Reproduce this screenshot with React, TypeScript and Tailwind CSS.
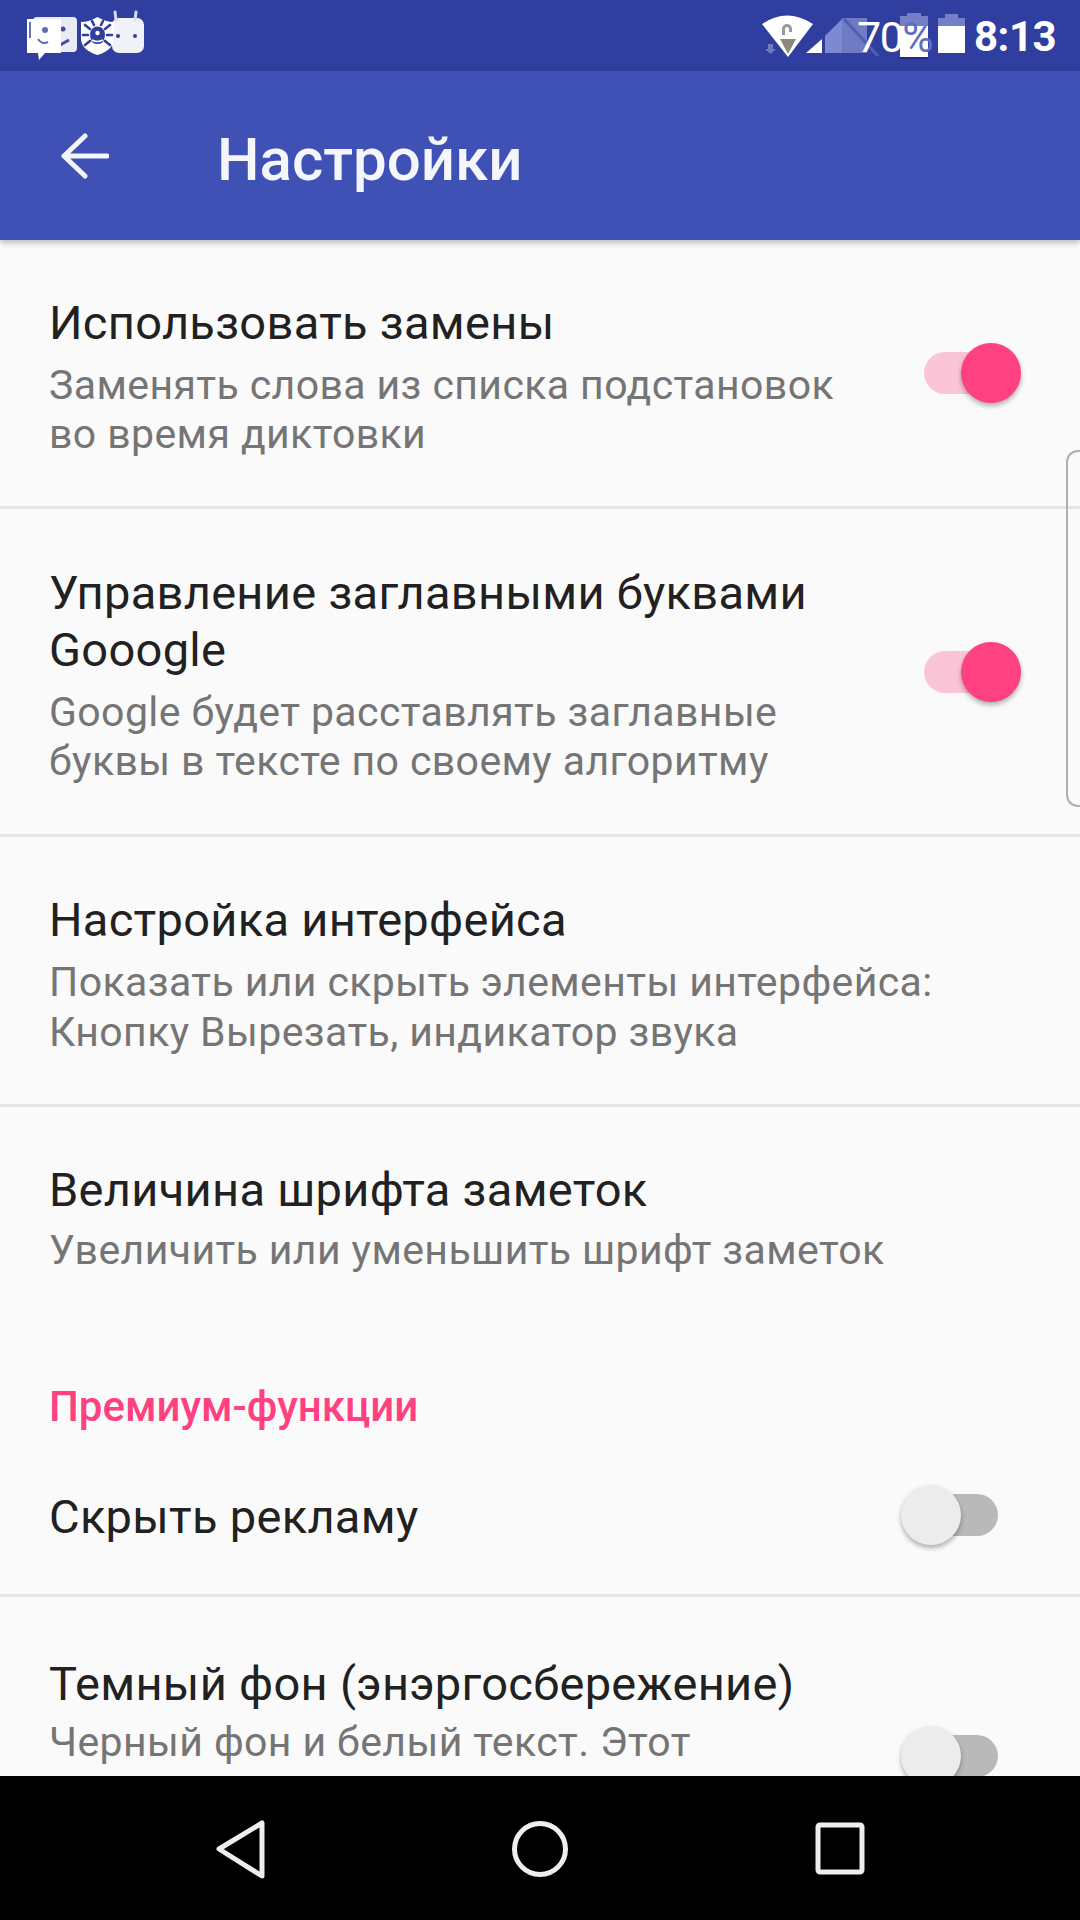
import React from "react";

function Sw({ on, className = "" }: { on: boolean; className?: string }) {
  return (
    <div className={`relative h-[60px] w-[97px] shrink-0 ${className}`}>
      <div className={`absolute top-[9px] h-[42px] rounded-full ${on ? "left-0 w-[76px] bg-[#fbc5d8]" : "left-[14px] w-[83px] bg-[#b9b9b9]"}`} />
      <div className={`absolute top-0 h-[60px] w-[60px] rounded-full ${on ? "left-[37px] bg-[#ff4081]" : "left-0 bg-[#ececec]"} shadow-[0_3px_5px_rgba(0,0,0,0.3)]`} />
    </div>
  );
}

function Row({ title, sub, sw, className = "" }: { title: React.ReactNode; sub?: React.ReactNode; sw?: "on" | "off"; className?: string }) {
  return (
    <div className={`flex items-center border-b-[3px] border-[#e4e4e4] pl-[49px] ${className}`}>
      <div className="w-[810px] shrink-0 pt-[7px]">
        <div className="text-[47px] leading-[57px] text-[#212121] tracking-[0.3px]">{title}</div>
        {sub && <div className="mt-[10px] text-[41px] leading-[49.5px] text-[#757575] tracking-[0.4px]">{sub}</div>}
      </div>
      {sw && <Sw on={sw === "on"} className={sw === "on" ? "ml-[65px]" : "ml-[42px] mt-[4px]"} />}
    </div>
  );
}

function LeftIcons() {
  return (
    <svg width="150" height="50" viewBox="0 0 150 50" className="block">
      <rect x="33" y="7" width="44" height="35" rx="4" fill="#e9ebf6" />
      <circle cx="63" cy="19" r="2.500" fill="#3f4ea5" />
      <path d="M60 35l9-5" stroke="#3f4ea5" strokeWidth="3" />
      <path d="M27 9h34v34H45l-6 7-1-7H27z" fill="#fff" />
      <circle cx="45" cy="20" r="3" fill="#5d6bb5" />
      <path d="M38 29q4 6 10 3" stroke="#5d6bb5" strokeWidth="2" fill="none" />
      <path d="M30 12v16" stroke="#303f9f" strokeWidth="1.500" />
      <rect x="112" y="8" width="32" height="35" rx="7" fill="#f1f1f8" />
      <path d="M116 10l-1-8M135 10l1-8" stroke="#d8daef" strokeWidth="3" strokeLinecap="round" />
      <circle cx="118" cy="26" r="2" fill="#303f9f" />
      <circle cx="135" cy="26" r="2" fill="#303f9f" />
      <path d="M97.500 7q8 5 16.500 5v16q0 12-16.500 17-16.500-5-16.500-17V12q8.500 0 16.500-5z" fill="#fff" />
      <path d="M90 24a7.500 7.500 0 0 1 15 0q0 10-7.500 10T90 24z" fill="#303f9f" />
      <circle cx="97.500" cy="23" r="2.200" fill="#fff" />
      <path d="M92 30q5 3 11 0" stroke="#fff" strokeWidth="1.500" fill="none" />
      <path d="M90 19l-5-4M105 19l5-4M88 25h-5M107 25h5M90 31l-5 4M105 31l5 4M94 15l-2-4M101 15l2-4" stroke="#303f9f" strokeWidth="2.600" strokeLinecap="round" />
    </svg>
  );
}

function RightIcons() {
  return (
    <svg width="210" height="50" viewBox="0 0 210 50" className="block">
      <path d="M0 14q25-17 51 0L26 47z" fill="#fff" />
      <path d="M18 29h16l-8 15z" fill="#8a8a7c" />
      <path d="M20 25v-6a5 5 0 0 1 10 0v3h-3v-3a2 2 0 0 0-4 0v6z" fill="#999" />
      <path d="M6 34h5v5h3l-5.500 5-5.500-5h3z" fill="#6f7cc0" />
      <path d="M44 43l16-14v14z" fill="#fff" />
      <path d="M63 43V26l17-17v34z" fill="#7e8ad0" />
      <path d="M80 43V8h25v35z" fill="#6f7cc4" />
      <path d="M82 9l34 37" stroke="#4f5eb5" strokeWidth="3" />
      <rect x="138" y="6" width="28" height="10" fill="#7380c6" />
      <rect x="145" y="3" width="14" height="6" fill="#7380c6" />
      <rect x="138" y="16" width="28" height="31" fill="#fff" />
      <path d="M138 48h28" stroke="#1f2a8a" strokeWidth="2" />
      <rect x="176" y="8" width="27" height="35" fill="#fff" />
      <rect x="176" y="8" width="27" height="8" fill="#7380c6" />
      <rect x="183" y="4" width="13" height="5" fill="#7380c6" />
    </svg>
  );
}

export default function App() {
  return (
    <div className="flex h-[1920px] w-[1080px] flex-col overflow-hidden bg-black font-['Roboto',sans-serif]">
      <div className="relative h-[71px] shrink-0 bg-[#303f9f]">
        <div className="absolute left-0 top-[10px]"><LeftIcons /></div>
        <div className="absolute left-[762px] top-[10px]"><RightIcons /></div>
        <span className="absolute left-[857px] top-[12px] text-[43px] leading-[50px] tracking-[-1.5px] text-white">70<span className="text-[#5f6dbf]">%</span></span>
        <span className="absolute left-[974px] top-[12px] text-[42px] font-bold leading-[50px] tracking-[-0.5px] text-white">8:13</span>
      </div>
      <div className="z-10 flex h-[169px] shrink-0 items-center bg-[#3f51b5] shadow-[0_3px_6px_rgba(0,0,0,0.25)]">
        <svg width="48" height="46" viewBox="0 0 48 46" className="ml-[61px] shrink-0" fill="none" stroke="#f4f6fd" strokeWidth="5" strokeLinecap="round" strokeLinejoin="round">
          <path d="M46 23H3M24 3L3 23l21 20" />
        </svg>
        <div className="ml-[108px] mt-[8px] text-[60px] font-medium leading-none text-[#f5f6fc]">Настройки</div>
      </div>
      <div className="relative h-[1536px] shrink-0 overflow-hidden bg-[#fafafa]">
        <Row className="h-[269px]" title="Использовать замены" sub="Заменять слова из списка подстановок во время диктовки" sw="on" />
        <Row className="h-[328px]" title="Управление заглавными буквами Gooogle" sub="Google будет расставлять заглавные буквы в тексте по своему алгоритму" sw="on" />
        <div className="flex h-[270px] flex-col justify-center border-b-[3px] border-[#e4e4e4] pl-[49px] pt-[7px]">
          <div className="text-[47px] leading-[57px] text-[#212121] tracking-[0.3px]">Настройка интерфейса</div>
          <div className="mt-[10px] w-[1000px] text-[41px] leading-[49.5px] text-[#757575] tracking-[0.4px]">Показать или скрыть элементы интерфейса: Кнопку Вырезать, индикатор звука</div>
        </div>
        <div className="pl-[49px] pt-[54px]">
          <div className="text-[47px] leading-[57px] text-[#212121] tracking-[0.3px]">Величина шрифта заметок</div>
          <div className="mt-[8px] text-[41px] leading-[49.5px] text-[#757575] tracking-[0.4px]">Увеличить или уменьшить шрифт заметок</div>
        </div>
        <div className="pl-[49px] pt-[106px] text-[42px] font-medium leading-[50px] text-[#ff4081]">Премиум-функции</div>
        <Row className="h-[165px]" title="Скрыть рекламу" sw="off" />
        <div className="flex h-[320px] items-start pl-[49px] pt-[58px]">
          <div className="w-[810px] shrink-0">
            <div className="text-[47px] leading-[57px] text-[#212121] tracking-[0.3px]">Темный фон (энэргосбережение)</div>
            <div className="mt-[6px] text-[41px] leading-[49.5px] text-[#757575] tracking-[0.4px]">Черный фон и белый текст. Этот</div>
          </div>
          <Sw on={false} className="ml-[42px] mt-[71px]" />
        </div>
        <div className="absolute right-0 top-[210px] h-[357px] w-[14px] rounded-l-[12px] border-y-2 border-l-2 border-[#b0b0b0]" />
      </div>
      <div className="flex h-[144px] shrink-0 items-start bg-black pt-[44px]">
        <svg width="1080" height="60" viewBox="0 0 1080 60" fill="none" stroke="#eeeeee" strokeWidth="5" strokeLinejoin="round">
          <path d="M262 3v53L219 29z" />
          <circle cx="540" cy="29" r="25.500" />
          <rect x="818" y="5" width="44" height="47" rx="2" />
        </svg>
      </div>
    </div>
  );
}
